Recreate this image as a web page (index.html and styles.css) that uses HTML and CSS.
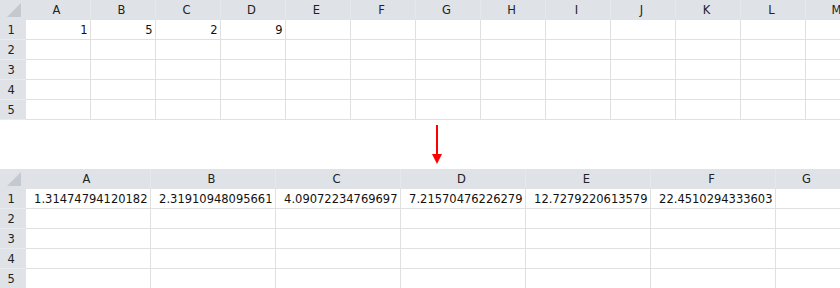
FILE: index.html
```html
<!DOCTYPE html>
<html lang="en">
<head>
    <meta charset="UTF-8">
    <title>Sheet before and after</title>
    <link rel="stylesheet" href="styles.css">
</head>
<body>
    <!-- input sheet -->
    <div class="sheet">
        <table class="grid narrow">
            <colgroup><col class="rowhead"><col span="13" class="col"></colgroup>
            <tr class="head">
                <th class="corner"><svg width="24" height="19" viewBox="0 0 24 19"><polygon points="21,3 21,17 7,17" fill="#c4c9cf"/></svg></th>
                <th>A</th><th>B</th><th>C</th><th>D</th><th>E</th><th>F</th><th>G</th>
                <th>H</th><th>I</th><th>J</th><th>K</th><th>L</th><th>M</th>
            </tr>
            <tr><th>1</th><td>1</td><td>5</td><td>2</td><td>9</td><td></td><td></td><td></td><td></td><td></td><td></td><td></td><td></td><td></td></tr>
            <tr><th>2</th><td></td><td></td><td></td><td></td><td></td><td></td><td></td><td></td><td></td><td></td><td></td><td></td><td></td></tr>
            <tr><th>3</th><td></td><td></td><td></td><td></td><td></td><td></td><td></td><td></td><td></td><td></td><td></td><td></td><td></td></tr>
            <tr><th>4</th><td></td><td></td><td></td><td></td><td></td><td></td><td></td><td></td><td></td><td></td><td></td><td></td><td></td></tr>
            <tr><th>5</th><td></td><td></td><td></td><td></td><td></td><td></td><td></td><td></td><td></td><td></td><td></td><td></td><td></td></tr>
        </table>
    </div>

    <div class="arrow">
        <svg width="12" height="42" viewBox="0 0 12 42">
            <line x1="6" y1="1" x2="6" y2="32" stroke="#ff0000" stroke-width="2"/>
            <polygon points="1,30 11,30 6,40" fill="#ff0000"/>
        </svg>
    </div>

    <!-- result sheet -->
    <div class="sheet">
        <table class="grid wide">
            <colgroup><col class="rowhead"><col span="6" class="col"><col class="last"></colgroup>
            <tr class="head">
                <th class="corner"><svg width="24" height="19" viewBox="0 0 24 19"><polygon points="21,3 21,17 7,17" fill="#c4c9cf"/></svg></th>
                <th>A</th><th>B</th><th>C</th><th>D</th><th>E</th><th>F</th><th>G</th>
            </tr>
            <tr><th>1</th><td>1.31474794120182</td><td>2.31910948095661</td><td>4.09072234769697</td><td>7.21570476226279</td><td>12.7279220613579</td><td>22.4510294333603</td><td></td></tr>
            <tr><th>2</th><td></td><td></td><td></td><td></td><td></td><td></td><td></td></tr>
            <tr><th>3</th><td></td><td></td><td></td><td></td><td></td><td></td><td></td></tr>
            <tr><th>4</th><td></td><td></td><td></td><td></td><td></td><td></td><td></td></tr>
            <tr><th>5</th><td></td><td></td><td></td><td></td><td></td><td></td><td></td></tr>
        </table>
    </div>
</body>
</html>
```

FILE: styles.css
```css
body {
    margin: 0;
    background: #fff;
    font-family: "DejaVu Sans", Verdana, sans-serif;
    font-size: 11.5px;
    color: #111;
}
.sheet {
    width: 840px;
    overflow: hidden;
}
.grid {
    border-collapse: collapse;
    table-layout: fixed;
}
.narrow {
    width: 870px;
}
.narrow .col {
    width: 65px;
}
.wide {
    width: 840px;
}
.wide .col {
    width: 125px;
}
.wide .last {
    width: 65px;
}
.grid .rowhead {
    width: 25px;
}
.grid th,
.grid td {
    height: 19px;
    padding: 0 2px 0 0;
    white-space: nowrap;
    overflow: hidden;
    font-weight: normal;
}
.grid td {
    text-align: right;
    border-right: 1px solid #e0e0e0;
    border-bottom: 1px solid #e0e0e0;
}
.grid th {
    background: #dfe3e8;
    color: #222;
    text-align: center;
    border-right: 1px solid #e6e9ec;
    border-bottom: 1px solid #e8ebee;
}
.grid tr > th:first-child {
    padding: 0 2px 0 0;
    border-right: 1px solid #dfe3e8;
}
.grid .head th {
    border-bottom: 1px solid #dfe3e8;
}
.grid .corner {
    padding: 0;
    line-height: 0;
}
.arrow {
    height: 49px;
    padding-left: 431px;
    box-sizing: border-box;
    padding-top: 4px;
}
.arrow svg {
    display: block;
}
```
